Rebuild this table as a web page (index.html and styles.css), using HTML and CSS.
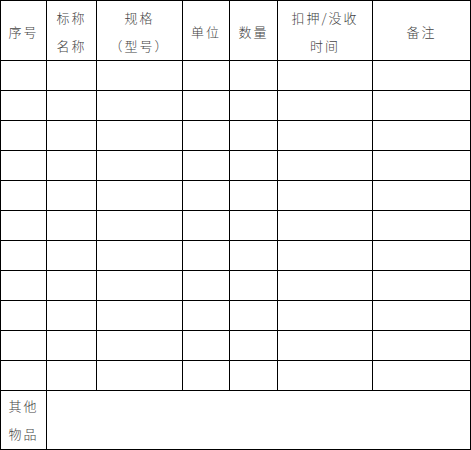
FILE: index.html
```html
<!DOCTYPE html>
<html lang="zh">
<head>
<meta charset="utf-8">
<link rel="stylesheet" href="styles.css">
</head>
<body>
<table class="list">
  <colgroup>
    <col class="c1"><col class="c2"><col class="c3"><col class="c4"><col class="c5"><col class="c6"><col class="c7">
  </colgroup>
  <tr class="head">
    <td>序号</td>
    <td>标称<br>名称</td>
    <td>规格<br>（型号）</td>
    <td>单位</td>
    <td>数量</td>
    <td>扣押/没收<br>时间</td>
    <td>备注</td>
  </tr>
  <tr class="row"><td></td><td></td><td></td><td></td><td></td><td></td><td></td></tr>
  <tr class="row"><td></td><td></td><td></td><td></td><td></td><td></td><td></td></tr>
  <tr class="row"><td></td><td></td><td></td><td></td><td></td><td></td><td></td></tr>
  <tr class="row"><td></td><td></td><td></td><td></td><td></td><td></td><td></td></tr>
  <tr class="row"><td></td><td></td><td></td><td></td><td></td><td></td><td></td></tr>
  <tr class="row"><td></td><td></td><td></td><td></td><td></td><td></td><td></td></tr>
  <tr class="row"><td></td><td></td><td></td><td></td><td></td><td></td><td></td></tr>
  <tr class="row"><td></td><td></td><td></td><td></td><td></td><td></td><td></td></tr>
  <tr class="row"><td></td><td></td><td></td><td></td><td></td><td></td><td></td></tr>
  <tr class="row"><td></td><td></td><td></td><td></td><td></td><td></td><td></td></tr>
  <tr class="row"><td></td><td></td><td></td><td></td><td></td><td></td><td></td></tr>
  <tr class="other">
    <td>其他<br>物品</td>
    <td colspan="6"></td>
  </tr>
</table>
</body>
</html>
```

FILE: styles.css
```css
html, body {
  margin: 0;
  padding: 0;
  background: #fff;
}
body {
  font-family: "Noto Sans CJK SC", "Noto Sans", sans-serif;
  font-size: 13px;
  color: #444;
}
.list {
  border-collapse: collapse;
  table-layout: fixed;
  width: 470px;
}
.list td {
  border: 1px solid #000;
  padding: 0;
  text-align: center;
  vertical-align: middle;
  line-height: 28px;
  letter-spacing: 2px;
  font-weight: 300;
}
.c1 { width: 46px; }
.c2 { width: 50px; }
.c3 { width: 86px; }
.c4 { width: 47px; }
.c5 { width: 48px; }
.c6 { width: 95px; }
.c7 { width: 98px; }
.head td { height: 57px; padding-top: 2px; }
.row td { height: 29px; }
.other td { height: 58px; }
```
